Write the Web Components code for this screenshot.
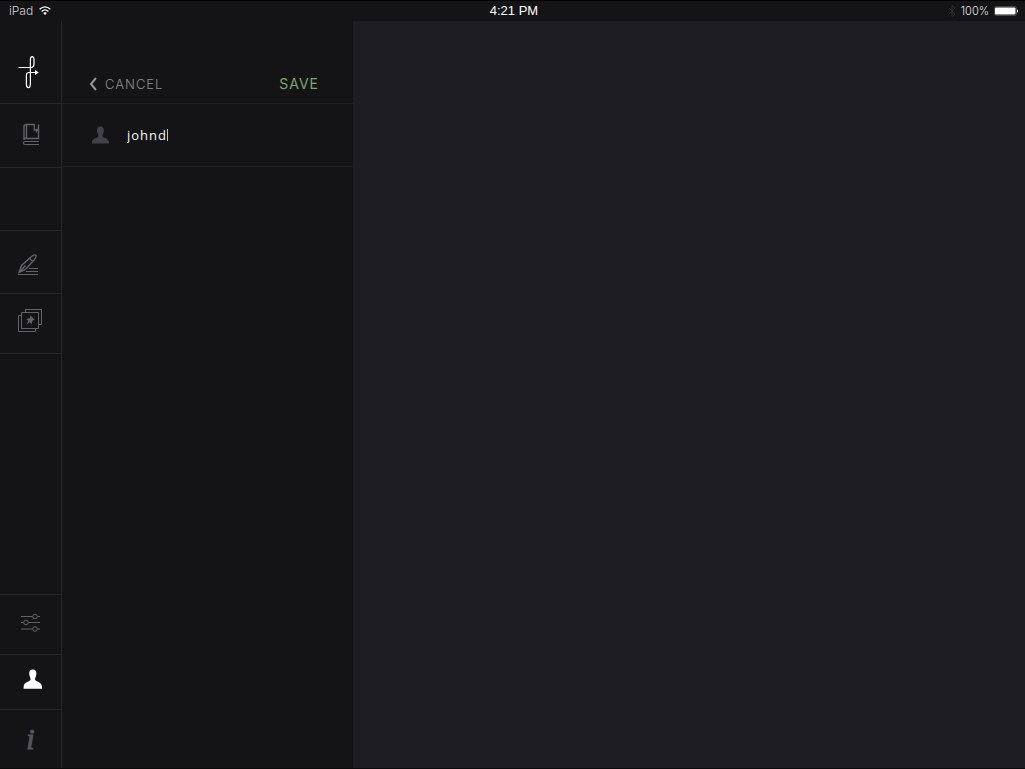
<!DOCTYPE html>
<html lang="en">
<head>
<meta charset="utf-8">
<title>Edit profile</title>
<style>
  html, body { margin: 0; height: 100%; background: #1e1d21; }
  body { font-family: "Open Sans", "Noto Sans", sans-serif; color: #f4f4f6; }
</style>
</head>
<body>
<app-shell>
  <status-bar slot="status"></status-bar>
  <nav-rail slot="rail"></nav-rail>
  <name-editor slot="panel"></name-editor>
</app-shell>

<template id="app-shell">
  <style>
    :host { display: flex; flex-direction: column; min-height: 100vh; box-sizing: border-box; border-bottom: 1px solid #0a0a0b; }
    .body { flex: 1; display: grid; grid-template-columns: 62px 291px 1fr; background: #1e1d21; }
    ::slotted([slot="rail"]) { min-height: 100%; }
  </style>
  <slot name="status"></slot>
  <div class="body">
    <slot name="rail"></slot>
    <slot name="panel"></slot>
    <main><slot></slot></main>
  </div>
</template>

<template id="status-bar">
  <style>
    :host { display: grid; grid-template-columns: 1fr auto 1fr; align-items: center; height: 21px; box-sizing: border-box; border-top: 1px solid #000; padding: 0 6px 0 9px; background: #141416; color: #d0d0d2; }
    div { display: flex; align-items: center; }
    .device { gap: 6px; font: 300 12px/20px Inter, sans-serif; }
    .time { color: #fff; font: 13px/20px "Liberation Sans", sans-serif; }
    .power { justify-content: flex-end; gap: 5px; font: 300 11px/20px Inter, sans-serif; color: #e4e4e6; }
    svg { display: block; }
  </style>
  <div class="device"><span>iPad</span>
    <svg width="12" height="10" viewBox="0 0 12 10" fill="none" stroke="#fff" stroke-width="1.3" aria-label="Wi-Fi"><path d="M.6 3.2Q6-1.5 11.4 3.2M2.6 5.4Q6 2.4 9.4 5.4"/><path d="M4.1 7Q6 5.4 7.9 7L6 9Z" fill="#fff" stroke="none"/></svg>
  </div>
  <div class="time">4:21 PM</div>
  <div class="power">
    <svg width="8" height="12" viewBox="0 0 8 12" fill="none" stroke="#2e2e32"><path d="M1 3L7 9L4 11.5V.5L7 3L1 9"/></svg>
    <span>100%</span>
    <svg width="25" height="10" viewBox="0 0 25 10" aria-label="Battery full"><rect x=".5" y=".5" width="22" height="9" rx="1.5" fill="none" stroke="#444448"/><rect x="1" y="1.5" width="20.5" height="7" rx="1" fill="#fff"/><path d="M23 3.2Q25 5 23 6.8Z" fill="#fff"/></svg>
  </div>
</template>

<template id="nav-rail">
  <style>
    :host { display: block; box-sizing: border-box; border-right: 1px solid #28282b; background: #141416; color: #62626a; }
    nav { display: flex; flex-direction: column; height: 100%; }
    button { display: block; box-sizing: border-box; width: 100%; padding: 0; border: 0; border-bottom: 1px solid #28282b; background: none; color: inherit; height: 63px; }
    svg { display: block; fill: none; stroke: currentColor; }
    .logo { height: 83px; color: #fff; }
    .tall { height: 64px; }
    .short { height: 60px; }
    .gap { flex: 1; border-bottom: 1px solid #28282b; }
    .on { height: 55px; color: #fff; }
    .info { height: 58px; border: 0; color: #55555c; font: italic 400 30px/58px "Liberation Serif", serif; -webkit-text-stroke: 1px currentColor; }
    .blank { height: 63px; box-sizing: border-box; border-bottom: 1px solid #28282b; }
  </style>
  <nav aria-label="Main">
    <button class="logo" aria-label="Home">
      <svg width="61" height="82" viewBox="0 21 61 82" stroke-width="1.2"><path d="M18.5 67.5H31.5Q34 67 34 64V60Q34 56.7 32.2 56.7Q30.4 56.7 30.4 60V84Q30.4 87.7 28.3 87.7Q26.4 87.7 26.4 84V75Q26.4 72.5 29 72.5H36"/><path d="M35 70L38.8 72.5L35 75Z" fill="currentColor" stroke="none"/></svg>
    </button>
    <button class="tall" aria-label="Library">
      <svg width="61" height="63" viewBox="0 104 61 63"><path d="M38.5 124.5V138.5H26.5V124.5H34M24 140V126Q24 124.8 26.5 124.8M24 139.5Q24 138 26.5 138" stroke-width="1.4"/><path d="M39 141.5H25Q23.5 141.5 23.5 143Q23.5 144.5 25 144.5H39" stroke-width="1.2"/><path d="M34.3 124V130.5L36.4 129.5V131.5L38.5 129" stroke-width="1.2"/></svg>
    </button>
    <div class="blank"></div>
    <button aria-label="Write">
      <svg width="61" height="63" viewBox="0 231 61 63"><path d="M18 274.5H38M26 271.5H38M29 268.5H38"/><path d="M19 272.5L21.5 265.5L31 257Q34.5 254 35.8 255.2Q36.8 256.5 34 260L25.5 269.5ZM19 272.5L25.5 265.5M29.5 258.5L32.8 261.5" stroke-width="1.4"/></svg>
    </button>
    <button class="short" aria-label="Pinned pages">
      <svg width="61" height="60" viewBox="0 294 61 60"><path d="M21.5 312.5H38.5V328.5H21.5ZM25.5 312.5V309.5H41.5V324.5H38.5M21.5 315.5H18.5V331.5H35.5V328.5"/><path d="M30.5 315.6L34.5 319.6L33.6 320.6L32.6 320.2L31.6 324.2L29.6 322.3L26 325L28.4 321.1L26.4 319L30.2 318.1L29.9 316.6Z" fill="currentColor" stroke="none"/></svg>
    </button>
    <div class="gap"></div>
    <button class="short" aria-label="Settings">
      <svg width="61" height="59" viewBox="0 595 61 59"><path d="M21 616.5H32.5M37.5 616.5H40M21 622.5H23.5M28.5 622.5H40M21 629H32.5M37.5 629H40"/><circle cx="35" cy="616.5" r="2.3"/><circle cx="26" cy="622.5" r="2.3"/><circle cx="35" cy="629" r="2.3"/></svg>
    </button>
    <button class="on" aria-label="Profile" aria-current="page">
      <svg width="61" height="54" viewBox="0 655 61 54"><path d="M32.8 669.5C35.6 669.5 36.6 671.4 36.4 674C36.3 676.4 35 677.7 35 679.5C35 681.8 42 681.5 42 687V688.7H23.6V687C23.6 681.5 30.6 681.8 30.6 679.5C30.6 677.7 29.4 676.4 29.2 674C29 671.4 30 669.5 32.8 669.5Z" fill="currentColor" stroke="none"/></svg>
    </button>
    <button class="info" aria-label="About">i</button>
  </nav>
</template>

<template id="name-editor">
  <style>
    :host { display: block; background: #141416; }
    header { display: flex; align-items: flex-end; justify-content: space-between; box-sizing: border-box; height: 83px; padding: 0 34px 9px 27px; border-bottom: 1px solid #202023; }
    button { display: flex; align-items: center; gap: 8px; padding: 0; border: 0; background: none; font: 13px/20px Inter, sans-serif; letter-spacing: 1px; }
    .cancel { color: #8c8c93; font-weight: 300; }
    .save { color: #7da572; font-size: 14px; }
    label { display: flex; align-items: center; box-sizing: border-box; height: 63px; padding: 0 30px; border-bottom: 1px solid #202023; }
    label svg { margin-right: 18px; }
    input { field-sizing: content; padding: 0; border: 0; outline: 0; background: none; color: #f6f6f8; font: 13px/20px "Open Sans", sans-serif; letter-spacing: 1px; }
    .caret { width: 1px; height: 12px; background: #c4c4c8; }
    svg { display: block; }
  </style>
  <header>
    <button class="cancel"><svg width="8" height="14" viewBox="0 0 8 14" fill="none" stroke="#96969d" stroke-width="2"><path d="M7 1L2 7L7 13"/></svg>CANCEL</button>
    <button class="save">SAVE</button>
  </header>
  <label>
    <svg width="17" height="18" viewBox="0 0 17 18" fill="#414147"><path d="M8.4 .5C11 .5 12 2.4 11.8 5C11.7 7.2 10.5 8.4 10.5 10C10.5 12.3 17 11.8 17 16.2V17.5H0V16.2C0 11.8 6.4 12.3 6.4 10C6.4 8.4 5.2 7.2 5 5C4.8 2.4 5.8 .5 8.4 .5Z"/></svg>
    <input type="text" value="johnd" aria-label="User name" spellcheck="false"><span class="caret"></span>
  </label>
</template>

<script>
  class TemplateElement extends HTMLElement {
    constructor() {
      super();
      const template = document.getElementById(this.localName);
      this.attachShadow({ mode: "open" }).append(template.content.cloneNode(true));
    }
  }
  customElements.define("app-shell", class AppShell extends TemplateElement {});
  customElements.define("status-bar", class StatusBar extends TemplateElement {});
  customElements.define("nav-rail", class NavRail extends TemplateElement {});
  customElements.define("name-editor", class NameEditor extends TemplateElement {});
</script>
</body>
</html>
